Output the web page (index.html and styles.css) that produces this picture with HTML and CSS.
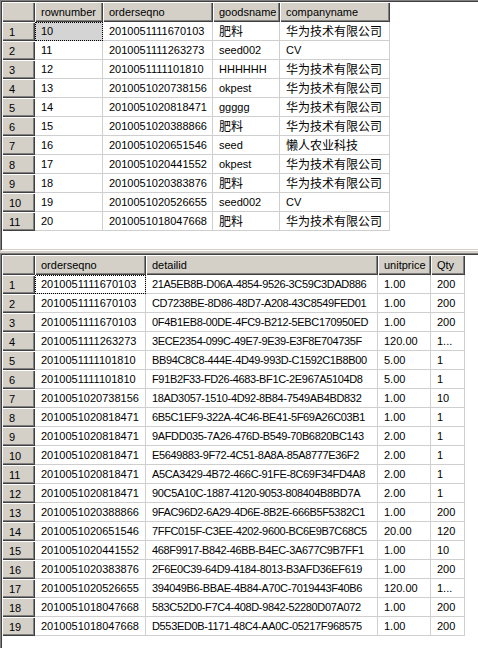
FILE: index.html
```html
<!DOCTYPE html>
<html>
<head>
<meta charset="utf-8">
<link rel="stylesheet" href="styles.css">
</head>
<body>
<div class="app">
  <div class="pane pane-top">
    <table class="grid grid-top">
      <colgroup><col class="w-rh"><col class="w-68"><col class="w-110"><col class="w-67"><col class="w-110"></colgroup>
      <thead><tr><th class="corner"></th><th>rownumber</th><th>orderseqno</th><th>goodsname</th><th>companyname</th></tr></thead>
      <tbody>
        <tr><td class="rh">1</td><td class="focus sel">10</td><td>2010051111670103</td><td><span class="cjk">肥料</span></td><td><span class="cjk">华为技术有限公司</span></td></tr>
        <tr><td class="rh">2</td><td>11</td><td>2010051111263273</td><td>seed002</td><td>CV</td></tr>
        <tr><td class="rh">3</td><td>12</td><td>2010051111101810</td><td>HHHHHH</td><td><span class="cjk">华为技术有限公司</span></td></tr>
        <tr><td class="rh">4</td><td>13</td><td>2010051020738156</td><td>okpest</td><td><span class="cjk">华为技术有限公司</span></td></tr>
        <tr><td class="rh">5</td><td>14</td><td>2010051020818471</td><td>ggggg</td><td><span class="cjk">华为技术有限公司</span></td></tr>
        <tr><td class="rh">6</td><td>15</td><td>2010051020388866</td><td><span class="cjk">肥料</span></td><td><span class="cjk">华为技术有限公司</span></td></tr>
        <tr><td class="rh">7</td><td>16</td><td>2010051020651546</td><td>seed</td><td><span class="cjk">懒人农业科技</span></td></tr>
        <tr><td class="rh">8</td><td>17</td><td>2010051020441552</td><td>okpest</td><td><span class="cjk">华为技术有限公司</span></td></tr>
        <tr><td class="rh">9</td><td>18</td><td>2010051020383876</td><td><span class="cjk">肥料</span></td><td><span class="cjk">华为技术有限公司</span></td></tr>
        <tr><td class="rh">10</td><td>19</td><td>2010051020526655</td><td>seed002</td><td>CV</td></tr>
        <tr><td class="rh">11</td><td>20</td><td>2010051018047668</td><td><span class="cjk">肥料</span></td><td><span class="cjk">华为技术有限公司</span></td></tr>
      </tbody>
    </table>
  </div>
  <div class="pane pane-bottom">
    <table class="grid grid-bottom">
      <colgroup><col class="w-rh"><col class="w-111"><col class="w-232"><col class="w-53"><col class="w-34"></colgroup>
      <thead><tr><th class="corner"></th><th>orderseqno</th><th>detailid</th><th>unitprice</th><th>Qty</th></tr></thead>
      <tbody>
        <tr><td class="rh">1</td><td class="focus">2010051111670103</td><td class="guid">21A5EB8B-D06A-4854-9526-3C59C3DAD886</td><td>1.00</td><td>200</td></tr>
        <tr><td class="rh">2</td><td>2010051111670103</td><td class="guid">CD7238BE-8D86-48D7-A208-43C8549FED01</td><td>1.00</td><td>200</td></tr>
        <tr><td class="rh">3</td><td>2010051111670103</td><td class="guid">0F4B1EB8-00DE-4FC9-B212-5EBC170950ED</td><td>1.00</td><td>200</td></tr>
        <tr><td class="rh">4</td><td>2010051111263273</td><td class="guid">3ECE2354-099C-49E7-9E39-E3F8E704735F</td><td>120.00</td><td>1...</td></tr>
        <tr><td class="rh">5</td><td>2010051111101810</td><td class="guid">BB94C8C8-444E-4D49-993D-C1592C1B8B00</td><td>5.00</td><td>1</td></tr>
        <tr><td class="rh">6</td><td>2010051111101810</td><td class="guid">F91B2F33-FD26-4683-BF1C-2E967A5104D8</td><td>5.00</td><td>1</td></tr>
        <tr><td class="rh">7</td><td>2010051020738156</td><td class="guid">18AD3057-1510-4D92-8B84-7549AB4BD832</td><td>1.00</td><td>10</td></tr>
        <tr><td class="rh">8</td><td>2010051020818471</td><td class="guid">6B5C1EF9-322A-4C46-BE41-5F69A26C03B1</td><td>1.00</td><td>1</td></tr>
        <tr><td class="rh">9</td><td>2010051020818471</td><td class="guid">9AFDD035-7A26-476D-B549-70B6820BC143</td><td>2.00</td><td>1</td></tr>
        <tr><td class="rh">10</td><td>2010051020818471</td><td class="guid">E5649883-9F72-4C51-8A8A-85A8777E36F2</td><td>2.00</td><td>1</td></tr>
        <tr><td class="rh">11</td><td>2010051020818471</td><td class="guid">A5CA3429-4B72-466C-91FE-8C69F34FD4A8</td><td>2.00</td><td>1</td></tr>
        <tr><td class="rh">12</td><td>2010051020818471</td><td class="guid">90C5A10C-1887-4120-9053-808404B8BD7A</td><td>2.00</td><td>1</td></tr>
        <tr><td class="rh">13</td><td>2010051020388866</td><td class="guid">9FAC96D2-6A29-4D6E-8B2E-666B5F5382C1</td><td>1.00</td><td>200</td></tr>
        <tr><td class="rh">14</td><td>2010051020651546</td><td class="guid">7FFC015F-C3EE-4202-9600-BC6E9B7C68C5</td><td>20.00</td><td>120</td></tr>
        <tr><td class="rh">15</td><td>2010051020441552</td><td class="guid">468F9917-B842-46BB-B4EC-3A677C9B7FF1</td><td>1.00</td><td>10</td></tr>
        <tr><td class="rh">16</td><td>2010051020383876</td><td class="guid">2F6E0C39-64D9-4184-8013-B3AFD36EF619</td><td>1.00</td><td>200</td></tr>
        <tr><td class="rh">17</td><td>2010051020526655</td><td class="guid">394049B6-BBAE-4B84-A70C-7019443F40B6</td><td>120.00</td><td>1...</td></tr>
        <tr><td class="rh">18</td><td>2010051018047668</td><td class="guid">583C52D0-F7C4-408D-9842-52280D07A072</td><td>1.00</td><td>200</td></tr>
        <tr><td class="rh">19</td><td>2010051018047668</td><td class="guid">D553ED0B-1171-48C4-AA0C-05217F968575</td><td>1.00</td><td>200</td></tr>
      </tbody>
    </table>
  </div>
</div>
</body>
</html>
```

FILE: styles.css
```css
html, body {
  margin: 0;
  padding: 0;
}
body {
  background: #d4d0c8;
  width: 478px;
  height: 648px;
  overflow: hidden;
  font-family: "Liberation Sans", Arial, "Noto Sans CJK SC", sans-serif;
  font-size: 11px;
  color: #000;
}
.app {
  display: flex;
  flex-direction: column;
  gap: 2px;
  height: 648px;
  width: 478px;
  overflow: hidden;
}
.pane {
  box-sizing: border-box;
  background: #fff;
  border-top: 1px solid #808080;
  border-left: 1px solid #808080;
  padding: 1px 0 0 1px;
  box-shadow: inset 1px 1px #404040;
  overflow: hidden;
}
.pane-top {
  height: 251px;
  border-bottom: 1px solid #fff;
  box-shadow: inset 1px 1px #404040, inset 0 -1px #d4d0c8;
}
.pane-bottom {
  flex: 1;
}
.grid {
  border-collapse: separate;
  border-spacing: 0;
  table-layout: fixed;
}
.grid-top { width: 388px; }
.grid-bottom { width: 463px; }
.w-rh { width: 33px; }
.w-68 { width: 68px; }
.w-110 { width: 110px; }
.w-67 { width: 67px; }
.w-111 { width: 111px; }
.w-232 { width: 232px; }
.w-53 { width: 53px; }
.w-34 { width: 34px; }

.grid th,
.grid td {
  box-sizing: border-box;
  padding: 0 0 0 6px;
  white-space: nowrap;
  overflow: hidden;
  text-overflow: clip;
  text-align: left;
  font-weight: normal;
  vertical-align: middle;
}
.grid th {
  height: 20px;
  line-height: 18px;
  background: #d4d0c8;
  box-shadow: inset 1px 1px #fff, inset -1px -1px #404040, inset -2px -2px #808080;
}
.grid th.corner {
  padding: 0;
}
.grid td {
  height: 19px;
  line-height: 18px;
  border-right: 1px solid #cfcfcf;
  border-bottom: 1px solid #cfcfcf;
}
.grid td.rh {
  padding-left: 7px;
  border: none;
  background: #d4d0c8;
  box-shadow: inset 1px 1px #fff, inset -1px -1px #404040, inset -2px -2px #808080;
}
.grid td.focus {
  outline: 1px dotted #000;
  outline-offset: -1px;
}
.grid td.sel {
  background: #d4d4d4;
}
.cjk {
  display: inline-block;
  vertical-align: top;
  height: 18px;
  font-family: "Noto Sans CJK SC", sans-serif;
  font-size: 12px;
  line-height: 18px;
}
.guid {
  letter-spacing: -0.35px;
}
```
